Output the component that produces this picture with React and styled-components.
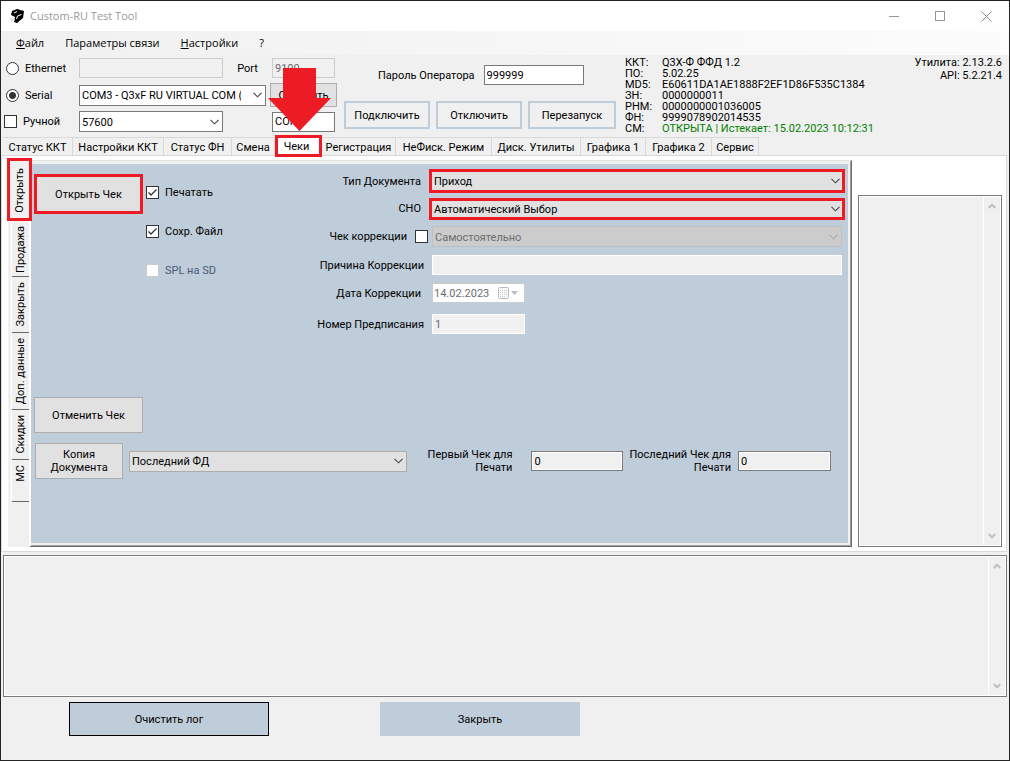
import React, { useState } from "react";
import styled, { createGlobalStyle, css } from "styled-components";

const BLUE = "#bfccd9";
const RED = "#ed1c24";
const FACE = "#f0f0f0";

const GlobalStyle = createGlobalStyle`
  * { box-sizing: border-box; }
  body {
    margin: 0;
    background: ${FACE};
    color: #000;
    font: 11px/13px Roboto, "Liberation Sans", sans-serif;
  }
  button, input, select, textarea {
    font: inherit;
    color: inherit;
    margin: 0;
    border-radius: 0;
    outline: none;
  }
`;

const Window = styled.div`
  display: flex;
  flex-direction: column;
  min-height: 100vh;
  border: 1px solid #242424;
  background: ${FACE};
`;

const TitleBar = styled.header`
  display: flex;
  align-items: center;
  height: 30px;
  padding-left: 8px;
  background: #fff;
`;

const Title = styled.h1`
  flex: 1;
  margin: 0 0 0 5px;
  color: #999;
  font: 11px/16px "Open Sans", "Noto Sans", sans-serif;
`;

const WindowButton = styled.button`
  display: flex;
  align-items: center;
  justify-content: center;
  width: 46px;
  height: 30px;
  padding: 0;
  border: 0;
  background: none;
`;

const MenuBar = styled.nav`
  display: flex;
  align-items: center;
  gap: 21px;
  height: 24px;
  padding-left: 15px;
  background: linear-gradient(90deg, ${FACE}, #fcfcfc);
`;

const MenuItem = styled.button`
  padding: 0;
  border: 0;
  background: none;
  font: 11px/16px "Open Sans", "Noto Sans", sans-serif;
`;

const TopPanel = styled.section`
  display: flex;
  height: 80px;
`;

const PortGrid = styled.div`
  display: grid;
  grid-template-columns: 78px 258px;
  grid-template-rows: 26px 28px 25px;
  align-items: center;
`;

const Option = styled.label`
  display: flex;
  align-items: center;
  gap: 6px;
  padding-left: ${props => props.indent || 0}px;
`;

const PortRow = styled.div`
  display: flex;
  align-items: center;
  justify-content: space-between;
  padding-right: ${props => props.end || 0}px;
`;

const Radio = styled.input.attrs({ type: "radio" })`
  appearance: none;
  flex: none;
  width: 13px;
  height: 13px;
  border: 1px solid #333;
  border-radius: 50%;
  background: #fff;

  &:checked {
    background: radial-gradient(circle, #333 0 3px, #fff 4px);
  }
`;

const TickInput = styled.input.attrs({ type: "checkbox" })`
  appearance: none;
  display: block;
  width: 13px;
  height: 13px;
  border: 1px solid #333;
  background: #fff;

  &:disabled {
    border-color: #ccc;
  }
`;

const TickWrap = styled.span`
  position: relative;
  flex: none;

  svg {
    position: absolute;
    inset: 0;
    pointer-events: none;
  }
`;

const TextBox = styled.input`
  flex: none;
  width: ${props => (props.$width ? `${props.$width}px` : "100%")};
  height: 20px;
  padding: 0 2px;
  border: 1px solid #7a7a7a;
  background: ${props => (props.$flat ? FACE : "#fff")};
  ${props => props.$flat && "box-shadow: inset 0 0 0 1px #fff;"}

  &:disabled {
    border-color: #ccc;
    background: ${FACE};
    color: #6d6d6d;
    ${props => props.$light && "border-color: #fff;"}
  }
`;

const SelectWrap = styled.span`
  position: relative;
  display: block;
  flex: none;
  width: ${props => (props.$width ? `${props.$width}px` : "100%")};

  svg {
    position: absolute;
    top: 50%;
    right: ${props => (props.$marked ? 5 : 4)}px;
    margin-top: -3px;
    pointer-events: none;
  }
`;

const SelectBox = styled.select`
  appearance: none;
  display: block;
  width: 100%;
  height: 21px;
  padding: 1px 24px 0 2px;
  border: 1px solid #7a7a7a;
  background: #fff;
  text-overflow: clip;

  ${props =>
    props.$grey &&
    css`
      border-color: #adadad;
      background: #e1e1e1;
    `}

  ${props =>
    props.$marked &&
    css`
      height: ${props.$tall ? 24 : 22}px;
      border: 3px solid ${RED};
    `}

  &:disabled {
    border-color: #bfbfbf;
    background: #ccc;
    color: #6d6d6d;
    opacity: 1;
  }
`;

const PushButton = styled.button`
  flex: none;
  width: ${props => props.$width}px;
  height: ${props => props.$height}px;
  padding: 0;
  border: 1px solid #adadad;
  background: #e1e1e1;

  ${props => props.$outlined && `border: 2px solid ${BLUE}; background: ${FACE};`}
  ${props => props.$marked && `border: 3px solid ${RED};`}
`;

const Connection = styled.div`
  display: flex;
  flex-direction: column;
  justify-content: space-between;
  padding: 10px 0 6px 7px;
`;

const Password = styled.label`
  display: flex;
  align-items: center;
  gap: 9px;
  padding-left: 34px;
`;

const ButtonRow = styled.div`
  display: flex;
  gap: 6px;
`;

const DeviceInfo = styled.dl`
  display: grid;
  grid-template-columns: 37px auto;
  align-content: start;
  flex: 1;
  margin: 0;
  padding: 2px 0 0 9px;
  line-height: 11px;
  white-space: nowrap;

  dd {
    margin: 0;
  }
`;

const Validity = styled.dd`
  color: #008000;
`;

const Versions = styled.div`
  padding: 1px 7px 0 0;
  text-align: right;
`;

const Tabs = styled.div`
  display: flex;
  align-items: flex-end;
  height: 20px;
  padding-left: 2px;
`;

const Tab = styled.button`
  position: relative;
  flex: none;
  width: ${props => props.$width}px;
  height: 18px;
  padding: 1px 0 0;
  border: solid #d9d9d9;
  border-width: 1px 1px 0 0;
  background: ${FACE};
  white-space: nowrap;

  ${props =>
    props.$active &&
    css`
      z-index: 1;
      height: 22px;
      margin-bottom: -2px;
      padding: 0 4px 0 0;
      border: 3px solid ${RED};
      background: #fff;
    `}
`;

const Pointer = styled.svg`
  position: absolute;
  left: 50%;
  bottom: 22px;
  margin-left: -31px;
  pointer-events: none;
`;

const TabPage = styled.main`
  display: flex;
  margin-right: 2px;
  padding: 4px 4px 4px 6px;
  border: 1px solid #d9d9d9;
  background: #fff;
`;

const SideTabs = styled.div`
  display: flex;
  flex: none;
  flex-direction: column;
  width: 21px;
  padding-left: 3px;
  background: ${FACE};
`;

const SideTab = styled.button`
  position: relative;
  display: flex;
  align-items: flex-start;
  justify-content: center;
  flex: none;
  height: ${props => props.$height}px;
  padding: 5px 0 0;
  border: 0;
  border-left: 1px solid #fff;
  border-bottom: 1px solid #696969;
  border-bottom-left-radius: 2px;
  background: ${FACE};

  span {
    writing-mode: vertical-rl;
    transform: rotate(180deg);
    white-space: nowrap;
  }

  ${props =>
    props.$active &&
    css`
      z-index: 1;
      width: 25px;
      margin: -2px 0 0 -4px;
      padding-top: 7px;
      border: 3px solid ${RED};
      border-radius: 0;
    `}
`;

const Receipt = styled.section`
  flex: 1;
  min-width: 0;
  border: solid;
  border-width: 1px 1px 1px 2px;
  border-color: #e3e3e3 #696969 #696969 #fff;
  padding: 3px 2px 2px 0;
  background: ${FACE};
  box-shadow: inset -1px -1px 0 #a0a0a0;
`;

const ReceiptBody = styled.div`
  margin: 0 1px 1px 0;
  padding: 3px 3px 64px;
  background: ${BLUE};
`;

const ReceiptTop = styled.div`
  display: grid;
  grid-template-columns: 109px 160px 1fr;
`;

const OpenCell = styled.div`
  padding-top: 7px;
`;

const Ticks = styled.div`
  display: flex;
  flex-direction: column;
  gap: 26px;
  padding: 19px 0 0 3px;
`;

const Tick = styled.label`
  display: flex;
  align-items: center;
  gap: 6px;
  color: ${props => (props.$muted ? "#4a5a78" : "#000")};
`;

const Fields = styled.div`
  display: grid;
  grid-template-columns: 126px 1fr;
  grid-template-rows: 28px 27px 29px 28px 28px 34px;
  align-items: center;
`;

const FieldLabel = styled.label`
  display: flex;
  align-items: center;
  justify-content: flex-end;
  gap: 8px;
  padding-right: ${props => props.$end}px;
  white-space: nowrap;
`;

const Field = styled.div`
  padding: 0 ${props => (props.$marked ? 0 : 3)}px;
`;

const DateField = styled.div`
  display: flex;
  align-items: center;
  width: 93px;
  height: 20px;
  border: 1px solid #ccc;
  background: #fff;

  input {
    flex: 1;
    min-width: 0;
    padding: 0 0 0 1px;
    border: 0;
    background: none;
    color: #6d6d6d;
  }

  svg {
    flex: none;
    margin-right: 5px;
  }
`;

const CancelRow = styled.div`
  padding-top: 56px;
`;

const CopyRow = styled.div`
  display: flex;
  align-items: center;
  gap: 6px;
  padding: 10px 14px 0 1px;
`;

const RangeField = styled.label`
  display: flex;
  flex: ${props => (props.$grow ? "1 0 auto" : "none")};
  align-items: center;
  justify-content: flex-end;
  gap: ${props => props.$gap}px;
  text-align: right;

  span {
    white-space: pre;
  }
`;

const SideLog = styled.div`
  display: flex;
  flex: none;
  width: 144px;
  margin: 35px 0 0 6px;
`;

const LogFrame = styled.div`
  display: flex;
  flex: 1;
  min-width: 0;
  border: 1px solid #7a7a7a;
  padding: 1px;
  background: #fff;
`;

const LogText = styled.textarea`
  display: block;
  flex: 1;
  min-width: 0;
  padding: 2px;
  border: 0;
  background: ${FACE};
  resize: none;
`;

const ScrollTrack = styled.div`
  display: flex;
  flex: none;
  flex-direction: column;
  align-items: center;
  justify-content: space-between;
  width: 16px;
  margin-left: 1px;
  padding: 6px 0;
  background: ${FACE};
`;

const MainLog = styled.section`
  display: flex;
  flex: 1;
  min-height: 100px;
  margin: 3px 2px 0;
`;

const Footer = styled.footer`
  display: flex;
  gap: 111px;
  padding: 5px 0 24px 68px;
`;

const FooterButton = styled.button`
  width: 200px;
  height: 34px;
  padding: 0;
  border: 1px solid ${props => (props.$focused ? "#000" : BLUE)};
  background: ${BLUE};
`;

const topTabs = [
  ["Статус ККТ", 70],
  ["Настройки ККТ", 91],
  ["Статус ФН", 68],
  ["Смена", 43],
  ["Чеки", 47],
  ["Регистрация", 74],
  ["НеФиск. Режим", 96],
  ["Диск. Утилиты", 89],
  ["Графика 1", 65],
  ["Графика 2", 66],
  ["Сервис", 47]
];

const sideTabs = [
  ["Открыть", 63],
  ["Продажа", 56],
  ["Закрыть", 56],
  ["Доп. данные", 77],
  ["Скидки", 50],
  ["МС", 42]
];

const AppIcon = () => (
  <svg width="16" height="16" viewBox="0 0 16 16">
    <path d="M3 3 L8 1 L15 3 L14 10 L8 15 L5 14 L6 9 L2 7 Z" fill="#000" />
    <path d="M5 5 L8 3.5 M8.5 8 L12.5 6.5 M7.5 11 L8.5 8" stroke="#fff" />
    <path d="M1 10 L4 9 L6 13 L2 13 Z" fill="#e4e4e4" />
  </svg>
);

const Chevron = ({ color = "#444" }) => (
  <svg width="9" height="6" viewBox="0 0 9 6" fill="none">
    <path d="M0.5 0.8 L4.5 4.8 L8.5 0.8" stroke={color} strokeWidth="1.1" />
  </svg>
);

const ScrollArrow = ({ up }) => (
  <svg width="8" height="7" viewBox="0 0 8 7" fill="none">
    <path
      d={up ? "M0.7 5 L4 1.7 L7.3 5" : "M0.7 2 L4 5.3 L7.3 2"}
      stroke="#bfbfbf"
      strokeWidth="2"
    />
  </svg>
);

const CheckBox = props => (
  <TickWrap>
    <TickInput {...props} />
    {props.checked && (
      <svg width="13" height="13" viewBox="0 0 13 13" fill="none">
        <path d="M2.5 6.5 L5 9 L10.5 3.5" stroke="#333" strokeWidth="1.3" />
      </svg>
    )}
  </TickWrap>
);

const Select = ({ value, width, marked, ...rest }) => (
  <SelectWrap $width={width} $marked={marked}>
    <SelectBox $marked={marked} defaultValue={value} {...rest}>
      <option>{value}</option>
    </SelectBox>
    <Chevron color={rest.disabled ? "#aaa" : "#444"} />
  </SelectWrap>
);

const Log = ({ label }) => (
  <LogFrame>
    <LogText readOnly cols={1} aria-label={label} />
    <ScrollTrack>
      <ScrollArrow up />
      <ScrollArrow />
    </ScrollTrack>
  </LogFrame>
);

const ConnectionPanel = () => {
  const [mode, setMode] = useState("serial");
  const [manual, setManual] = useState(false);

  return (
    <TopPanel>
      <PortGrid>
        <Option indent={5}>
          <Radio
            name="mode"
            checked={mode === "ethernet"}
            onChange={() => setMode("ethernet")}
          />
          Ethernet
        </Option>
        <PortRow end={2}>
          <TextBox $width={144} disabled aria-label="Ethernet" />
          <label htmlFor="port">Port</label>
          <TextBox id="port" $width={63} disabled defaultValue="9100" />
        </PortRow>
        <Option indent={5}>
          <Radio
            name="mode"
            checked={mode === "serial"}
            onChange={() => setMode("serial")}
          />
          Serial
        </Option>
        <PortRow>
          <Select
            width={187}
            value="COM3 - Q3xF RU VIRTUAL COM (COM3)"
            aria-label="Serial"
          />
          <PushButton $width={67} $height={24}>
            Обновить
          </PushButton>
        </PortRow>
        <Option indent={3}>
          <CheckBox checked={manual} onChange={() => setManual(!manual)} />
          Ручной
        </Option>
        <PortRow end={2}>
          <Select width={144} value="57600" aria-label="Baud" />
          <TextBox $width={63} defaultValue="COM1" aria-label="COM" />
        </PortRow>
      </PortGrid>

      <Connection>
        <Password>
          Пароль Оператора
          <TextBox $width={100} defaultValue="999999" />
        </Password>
        <ButtonRow>
          <PushButton $width={86} $height={28} $outlined>
            Подключить
          </PushButton>
          <PushButton $width={86} $height={28} $outlined>
            Отключить
          </PushButton>
          <PushButton $width={88} $height={28} $outlined>
            Перезапуск
          </PushButton>
        </ButtonRow>
      </Connection>

      <DeviceInfo>
        <dt>ККТ:</dt>
        <dd>Q3X-Ф ФФД 1.2</dd>
        <dt>ПО:</dt>
        <dd>5.02.25</dd>
        <dt>MD5:</dt>
        <dd>E60611DA1AE1888F2EF1D86F535C1384</dd>
        <dt>ЗН:</dt>
        <dd>0000000011</dd>
        <dt>РНМ:</dt>
        <dd>0000000001036005</dd>
        <dt>ФН:</dt>
        <dd>9999078902014535</dd>
        <dt>СМ:</dt>
        <Validity>ОТКРЫТА | Истекает: 15.02.2023 10:12:31</Validity>
      </DeviceInfo>
      <Versions>
        <div>Утилита: 2.13.2.6</div>
        <div>API: 5.2.21.4</div>
      </Versions>
    </TopPanel>
  );
};

const ReceiptPanel = () => {
  const [print, setPrint] = useState(true);
  const [save, setSave] = useState(true);
  const [correction, setCorrection] = useState(false);

  return (
    <Receipt>
      <ReceiptBody>
        <ReceiptTop>
          <OpenCell>
            <PushButton $width={109} $height={40} $marked>
              Открыть Чек
            </PushButton>
          </OpenCell>
          <Ticks>
            <Tick>
              <CheckBox checked={print} onChange={() => setPrint(!print)} />
              Печатать
            </Tick>
            <Tick>
              <CheckBox checked={save} onChange={() => setSave(!save)} />
              Сохр. Файл
            </Tick>
            <Tick $muted>
              <CheckBox disabled />
              SPL на SD
            </Tick>
          </Ticks>
          <Fields>
            <FieldLabel $end={8} htmlFor="type">
              Тип Документа
            </FieldLabel>
            <Field $marked>
              <Select id="type" value="Приход" marked $grey $tall />
            </Field>
            <FieldLabel $end={8} htmlFor="tax">
              СНО
            </FieldLabel>
            <Field $marked>
              <Select id="tax" value="Автоматический Выбор" marked $grey />
            </Field>
            <FieldLabel $end={1}>
              Чек коррекции
              <CheckBox
                checked={correction}
                onChange={() => setCorrection(!correction)}
              />
            </FieldLabel>
            <Field>
              <Select
                value="Самостоятельно"
                disabled
                aria-label="Чек коррекции"
              />
            </Field>
            <FieldLabel $end={5} htmlFor="reason">
              Причина Коррекции
            </FieldLabel>
            <Field>
              <TextBox id="reason" disabled $light />
            </Field>
            <FieldLabel $end={8} htmlFor="date">
              Дата Коррекции
            </FieldLabel>
            <Field>
              <DateField>
                <input id="date" disabled defaultValue="14.02.2023" />
                <svg width="21" height="12" viewBox="0 0 21 12">
                  <rect x="0.5" y="0.5" width="10" height="11" rx="1" fill="#fafafa" stroke="#bbb" />
                  <path d="M2 3.5H9 M2 5.5H9 M2 7.5H9 M2 9.5H7" stroke="#ccc" strokeDasharray="1 1" />
                  <path d="M13 4 H20 L16.5 8 Z" fill="#bbb" />
                </svg>
              </DateField>
            </Field>
            <FieldLabel $end={5} htmlFor="order">
              Номер Предписания
            </FieldLabel>
            <Field>
              <TextBox id="order" $width={93} disabled $light defaultValue="1" />
            </Field>
          </Fields>
        </ReceiptTop>

        <CancelRow>
          <PushButton $width={109} $height={36}>
            Отменить Чек
          </PushButton>
        </CancelRow>
        <CopyRow>
          <PushButton $width={88} $height={36}>
            Копия
            <br />
            Документа
          </PushButton>
          <Select width={278} value="Последний ФД" $grey aria-label="Документ" />
          <RangeField $grow $gap={19}>
            <span>{"Первый Чек для\nПечати"}</span>
            <TextBox $width={92} $flat defaultValue="0" />
          </RangeField>
          <RangeField $gap={7}>
            <span>{"Последний Чек для\nПечати"}</span>
            <TextBox $width={93} $flat defaultValue="0" />
          </RangeField>
        </CopyRow>
      </ReceiptBody>
    </Receipt>
  );
};

export default () => {
  return (
    <>
      <GlobalStyle />
      <Window>
        <TitleBar>
          <AppIcon />
          <Title>Custom-RU Test Tool</Title>
          <WindowButton aria-label="Свернуть">
            <svg width="11" height="11" viewBox="0 0 11 11">
              <path d="M0 5.5H10" stroke="#999" />
            </svg>
          </WindowButton>
          <WindowButton aria-label="Развернуть">
            <svg width="11" height="11" viewBox="0 0 11 11">
              <rect x="0.5" y="0.5" width="9" height="9" fill="none" stroke="#999" />
            </svg>
          </WindowButton>
          <WindowButton aria-label="Выйти">
            <svg width="11" height="11" viewBox="0 0 11 11">
              <path d="M0.5 0.5L10.5 10.5M10.5 0.5L0.5 10.5" stroke="#888" />
            </svg>
          </WindowButton>
        </TitleBar>
        <MenuBar>
          <MenuItem>
            <u>Ф</u>айл
          </MenuItem>
          <MenuItem>Параметры связи</MenuItem>
          <MenuItem>
            <u>Н</u>астройки
          </MenuItem>
          <MenuItem>?</MenuItem>
        </MenuBar>

        <ConnectionPanel />

        <Tabs>
          {topTabs.map(([name, width]) => (
            <Tab key={name} $width={width} $active={name === "Чеки"}>
              {name}
              {name === "Чеки" && (
                <Pointer width="63" height="64" viewBox="0 0 63 64">
                  <path d="M15 0H48V30H63L31.5 63L0 30H15Z" fill={RED} />
                </Pointer>
              )}
            </Tab>
          ))}
        </Tabs>
        <TabPage>
          <SideTabs>
            {sideTabs.map(([name, height]) => (
              <SideTab key={name} $height={height} $active={name === "Открыть"}>
                <span>{name}</span>
              </SideTab>
            ))}
          </SideTabs>
          <ReceiptPanel />
          <SideLog>
            <Log label="Ответ" />
          </SideLog>
        </TabPage>
        <MainLog>
          <Log label="Лог" />
        </MainLog>
        <Footer>
          <FooterButton $focused>Очистить лог</FooterButton>
          <FooterButton>Закрыть</FooterButton>
        </Footer>
      </Window>
    </>
  );
};
